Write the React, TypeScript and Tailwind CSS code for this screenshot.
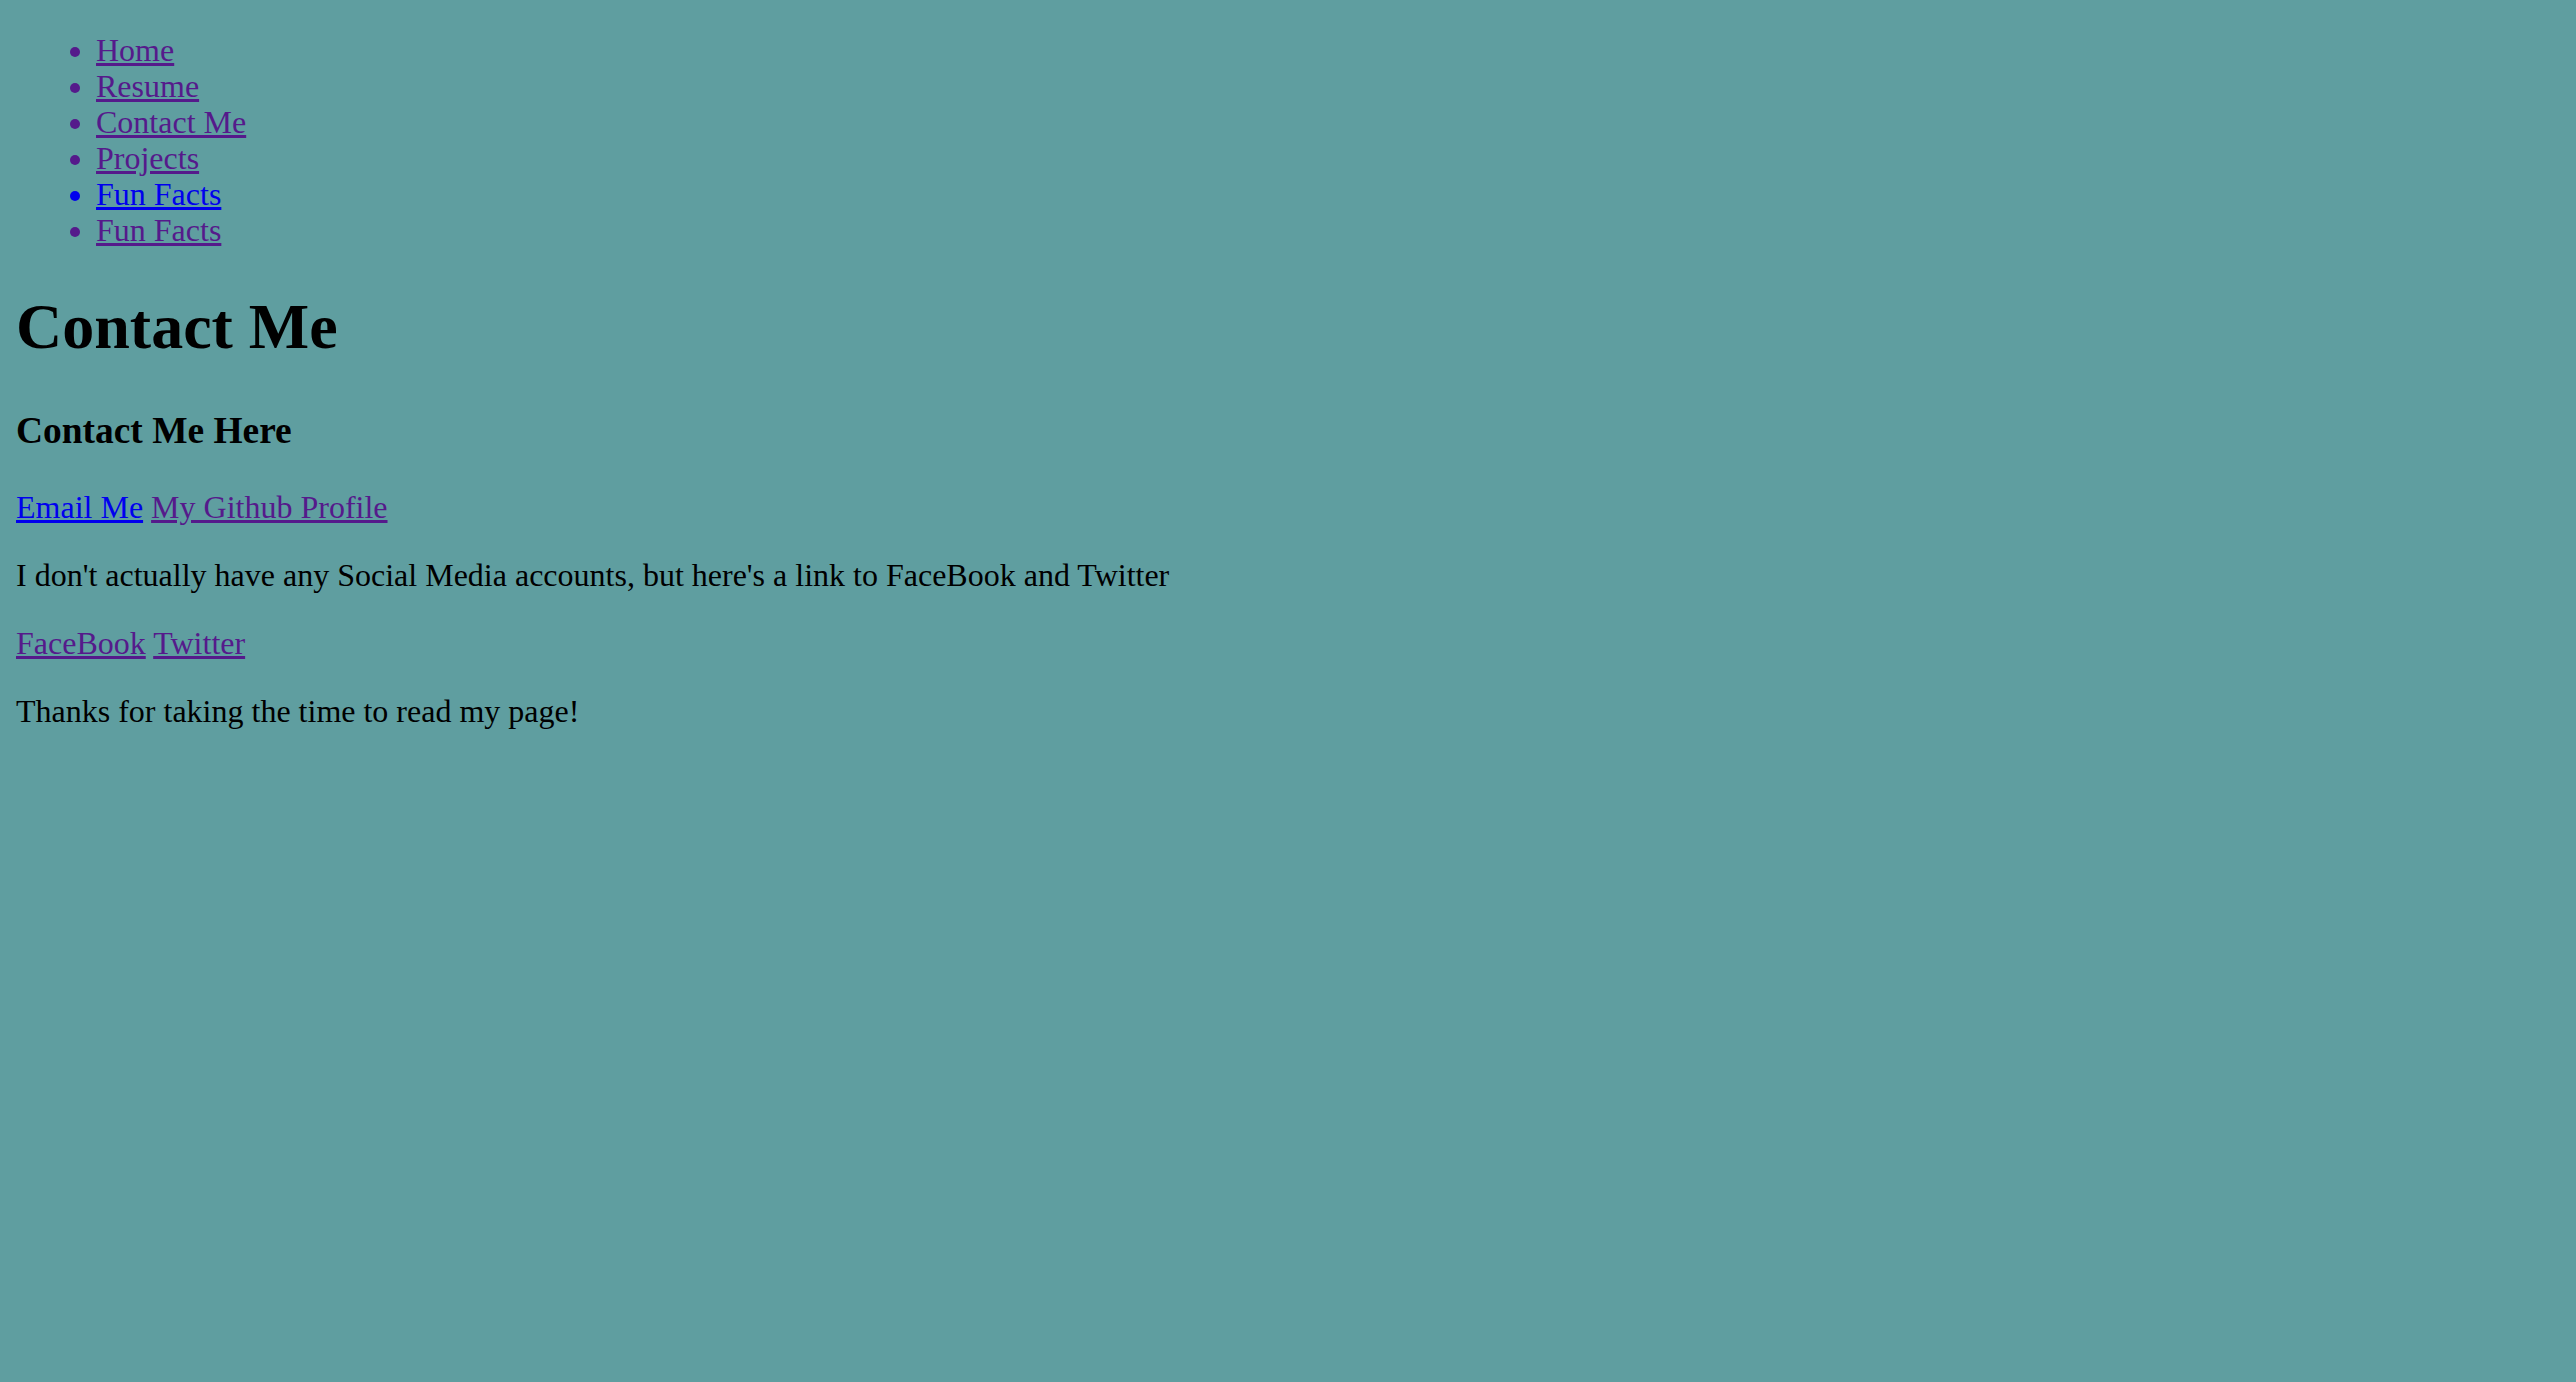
export default function App() {
  const navLinks = [
    { label: 'Home', visited: true },
    { label: 'Resume', visited: true },
    { label: 'Contact Me', visited: true },
    { label: 'Projects', visited: true },
    { label: 'Fun Facts', visited: false },
    { label: 'Fun Facts', visited: true },
  ];

  return (
    <div
      className="flow-root min-h-screen bg-[#5F9EA0] px-4 text-black text-[32px] leading-[1.125]"
      style={{ fontFamily: '"Liberation Serif", "Times New Roman", serif' }}
    >
      <ul className="list-disc pl-[80px] mt-[32px] mb-[32px]">
        {navLinks.map((l, i) => (
          <li key={i} className={l.visited ? 'text-[#551A8B]' : 'text-[#0000EE]'}>
            <a href="#" className="underline">
              {l.label}
            </a>
          </li>
        ))}
      </ul>

      <h1 className="text-[64px] font-bold leading-[1.125] my-[43px]">Contact Me</h1>
      <h3 className="text-[37.44px] font-bold leading-[1.125] mt-[47px] mb-[37px]">Contact Me Here</h3>

      <p className="my-[32px]">
        <a href="#" className="underline text-[#0000EE]">Email Me</a>{' '}
        <a href="#" className="underline text-[#551A8B]">My Github Profile</a>
      </p>
      <p className="my-[32px]">
        I don't actually have any Social Media accounts, but here's a link to FaceBook and Twitter
      </p>
      <p className="my-[32px]">
        <a href="#" className="underline text-[#551A8B]">FaceBook</a>{' '}
        <a href="#" className="underline text-[#551A8B]">Twitter</a>
      </p>
      <p className="my-[32px]">Thanks for taking the time to read my page!</p>
    </div>
  );
}
